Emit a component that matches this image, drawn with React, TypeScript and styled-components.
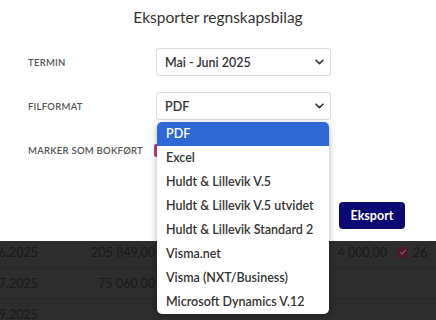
import styled, { createGlobalStyle } from 'styled-components'

const formats = [
  'PDF',
  'Excel',
  'Huldt & Lillevik V.5',
  'Huldt & Lillevik V.5 utvidet',
  'Huldt & Lillevik Standard 2',
  'Visma.net',
  'Visma (NXT/Business)',
  'Microsoft Dynamics V.12',
]

const rows = [
  { date: '30.06.2025', amount: '205 849,00', paid: '4 000,00', ref: '26' },
  { date: '31.07.2025', amount: '75 060,00', paid: '', ref: '' },
  { date: '30.09.2025', amount: '', paid: '', ref: '' },
]

const Chevron: React.FC = () => (
  <svg width='9' height='6' viewBox='0 0 9 6' fill='none'>
    <path
      d='M1 1.2 4.5 4.6 8 1.2'
      stroke='#333'
      strokeWidth='1.6'
      strokeLinecap='round'
      strokeLinejoin='round'
    />
  </svg>
)

const Check: React.FC = () => (
  <svg width='8' height='8' viewBox='0 0 8 8' fill='none'>
    <path d='M1.3 4.2 3.2 6 6.8 1.8' stroke='#7a5a66' strokeWidth='1.2' />
  </svg>
)

export default function App() {
  return (
    <>
      <GlobalStyle />
      <Page>
        <Modal>
          <Title>Eksporter regnskapsbilag</Title>
          <Form>
            <Label>Termin</Label>
            <Select>
              <span>Mai - Juni 2025</span>
              <Chevron />
            </Select>

            <Label>Filformat</Label>
            <SelectWrap>
              <Select>
                <span>PDF</span>
                <Chevron />
              </Select>
              <Options>
                {formats.map((f, idx) => (
                  <Option key={f} $active={idx === 0}>
                    {f}
                  </Option>
                ))}
              </Options>
            </SelectWrap>

            <Label>Marker som bokført</Label>
            <CheckCell>
              <Checkbox />
            </CheckCell>
          </Form>
          <Actions>
            <ExportButton type='button'>Eksport</ExportButton>
          </Actions>
        </Modal>

        <Table>
          {rows.map(r => (
            <Row key={r.date}>
              <DateCell>{r.date}</DateCell>
              <Amount>{r.amount}</Amount>
              <Amount>{r.paid}</Amount>
              <BoxCell>
                {r.ref && (
                  <DimBox>
                    <Check />
                  </DimBox>
                )}
              </BoxCell>
              <Ref>{r.ref}</Ref>
            </Row>
          ))}
        </Table>
      </Page>
    </>
  )
}

const GlobalStyle = createGlobalStyle`
  html, body {
    margin: 0;
    background: #2d2d2d;
    font-family: Lato, 'Noto Sans', sans-serif;
    overflow: hidden;
  }
`

const Page = styled.div`
  width: 436px;
  height: 320px;
  overflow: hidden;
  display: flex;
  flex-direction: column;
`

const Modal = styled.div`
  position: relative;
  z-index: 2;
  background: #fff;
  height: 241px;
  flex-shrink: 0;
  display: flex;
  flex-direction: column;
`

const Title = styled.div`
  margin-top: 7px;
  height: 20px;
  line-height: 20px;
  text-align: center;
  font-size: 15.5px;
  color: #333;
`

const Form = styled.div`
  margin: 21px 0 0 28px;
  display: grid;
  grid-template-columns: 128px 175px;
  grid-auto-rows: 28px;
  row-gap: 16px;
  align-items: center;
`

const Label = styled.div`
  font-size: 9.5px;
  font-weight: 600;
  letter-spacing: 0.25px;
  text-transform: uppercase;
  color: #555;
`

const SelectWrap = styled.div`
  position: relative;
  height: 28px;
`

const Select = styled.div`
  box-sizing: border-box;
  height: 28px;
  display: flex;
  align-items: center;
  justify-content: space-between;
  padding: 0 6px 0 8px;
  border: 1px solid #dcdcdc;
  border-radius: 3px;
  font-size: 12.5px;
  font-weight: 600;
  color: #333;
`

const Options = styled.div`
  position: absolute;
  top: 30px;
  left: 1px;
  width: 172px;
  background: #fff;
  border-radius: 5px;
  overflow: hidden;
  box-shadow: 0 2px 7px rgba(0, 0, 0, 0.3);
`

const Option = styled.div<{ $active: boolean }>`
  height: 24px;
  line-height: 24px;
  padding-left: 9px;
  font-size: 12.5px;
  font-weight: 600;
  white-space: nowrap;
  color: ${p => (p.$active ? '#fff' : '#333')};
  background: ${p => (p.$active ? '#2f67d4' : 'transparent')};
`

const CheckCell = styled.div`
  display: flex;
  align-items: center;
`

const Checkbox = styled.div`
  width: 13px;
  height: 13px;
  margin-left: -2px;
  border-radius: 2px;
  background: #c2407e;
`

const Actions = styled.div`
  margin-top: 38px;
  display: flex;
  justify-content: flex-end;
  padding-right: 31px;
`

const ExportButton = styled.button`
  height: 27px;
  width: 66px;
  border: none;
  border-radius: 4px;
  background: #0b0872;
  color: #fff;
  font-family: inherit;
  font-size: 12.5px;
  font-weight: 700;
  padding: 0;
`

const Table = styled.div`
  margin-top: -4px;
  display: flex;
  flex-direction: column;
`

const Row = styled.div`
  height: 30px;
  display: grid;
  grid-template-columns: 60px 127px 232px 21px 40px;
  margin-left: -32px;
  align-items: center;
  border-bottom: 1px solid #282828;
  font-size: 12.5px;
  color: #1a1a1a;
`

const DateCell = styled.div`
  text-align: right;
  padding-right: 0;
  transform: translateX(6px);
`

const Amount = styled.div`
  text-align: right;
`

const BoxCell = styled.div`
  display: flex;
  justify-content: flex-end;
`

const DimBox = styled.div`
  width: 11px;
  height: 11px;
  border-radius: 2px;
  background: #4a1a2c;
  display: flex;
  align-items: center;
  justify-content: center;
`

const Ref = styled.div`
  padding-left: 5px;
`
